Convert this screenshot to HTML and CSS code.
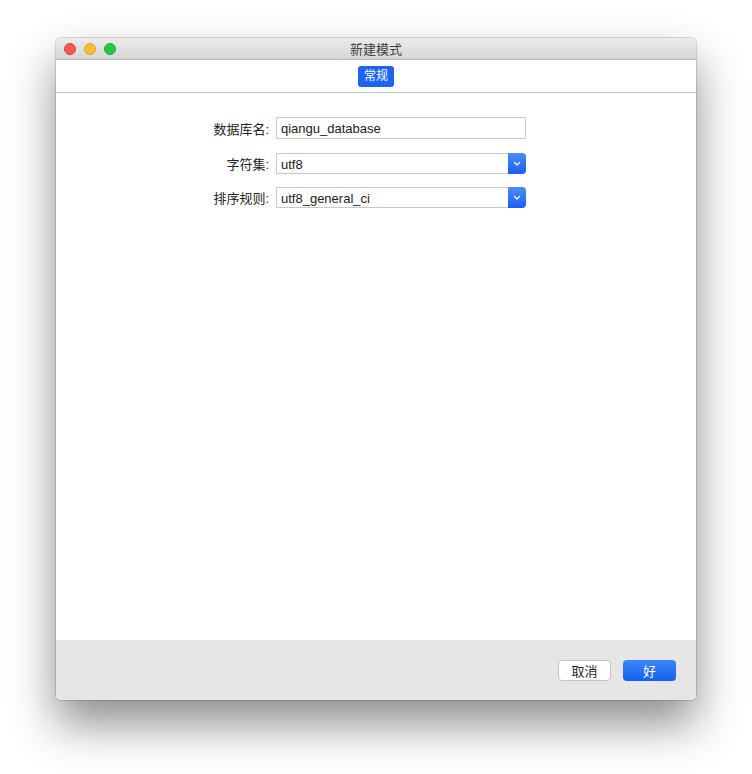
FILE: index.html
```html
<!DOCTYPE html>
<html lang="zh-CN">
<head>
    <meta charset="UTF-8">
    <title>新建模式</title>
    <link rel="stylesheet" href="styles.css">
</head>
<body>
    <div class="window">
        <!-- Title Bar -->
        <div class="titlebar">
            <div class="lights">
                <span class="light red"></span>
                <span class="light yellow"></span>
                <span class="light green"></span>
            </div>
            <div class="title">新建模式</div>
        </div>

        <!-- Tabs -->
        <div class="toolbar">
            <span class="tab active">常规</span>
        </div>

        <!-- Form -->
        <div class="content">
            <div class="form-row first">
                <label>数据库名:</label>
                <div class="field">qiangu_database</div>
            </div>
            <div class="form-row">
                <label>字符集:</label>
                <div class="field select">
                    <span>utf8</span>
                    <span class="arrow">
                        <svg width="8" height="6" viewBox="0 0 8 6"><path d="M1.5 1.5 L4 4 L6.5 1.5" fill="none" stroke="#fff" stroke-width="1.3" stroke-linecap="round" stroke-linejoin="round"/></svg>
                    </span>
                </div>
            </div>
            <div class="form-row">
                <label>排序规则:</label>
                <div class="field select">
                    <span>utf8_general_ci</span>
                    <span class="arrow">
                        <svg width="8" height="6" viewBox="0 0 8 6"><path d="M1.5 1.5 L4 4 L6.5 1.5" fill="none" stroke="#fff" stroke-width="1.3" stroke-linecap="round" stroke-linejoin="round"/></svg>
                    </span>
                </div>
            </div>
        </div>

        <!-- Footer -->
        <div class="footer">
            <button class="btn">取消</button>
            <button class="btn primary">好</button>
        </div>
    </div>
</body>
</html>
```

FILE: styles.css
```css
/* General Styles */
html {
    height: 100%;
}

body {
    margin: 0;
    min-height: 100%;
    box-sizing: border-box;
    padding: 38px 0 0 56px;
    background-color: #fff;
    font-family: "Liberation Sans", "Noto Sans CJK SC", sans-serif;
    font-size: 13px;
    color: #262626;
}

/* Window */
.window {
    width: 640px;
    height: 662px;
    display: flex;
    flex-direction: column;
    background-color: #fff;
    border-radius: 5px;
    box-shadow: 0 0 0 1px rgba(0, 0, 0, 0.15), 0 24px 46px rgba(0, 0, 0, 0.45);
    overflow: hidden;
}

/* Title Bar */
.titlebar {
    height: 21px;
    display: flex;
    align-items: center;
    position: relative;
    background: linear-gradient(#ececec, #d6d6d6);
    border-bottom: 1px solid #b4b4b4;
}

.lights {
    display: flex;
    gap: 8px;
    padding-left: 8px;
}

.light {
    width: 12px;
    height: 12px;
    border-radius: 50%;
    box-sizing: border-box;
}

.red { background-color: #fd5753; border: 1px solid #df3e3a; }
.yellow { background-color: #febc2e; border: 1px solid #dea123; }
.green { background-color: #28c840; border: 1px solid #1eaa2f; }

.title {
    position: absolute;
    left: 0;
    right: 0;
    text-align: center;
    color: #404040;
    font-size: 13px;
}

/* Tabs */
.toolbar {
    height: 32px;
    display: flex;
    justify-content: center;
    align-items: center;
    border-bottom: 1px solid #c1c1c1;
}

.tab {
    width: 36px;
    height: 21px;
    line-height: 21px;
    text-align: center;
    border-radius: 3px;
    font-size: 12px;
}

.tab.active {
    background-color: #1e64f0;
    color: #fff;
}

/* Form */
.content {
    flex-grow: 1;
    padding-top: 24px;
    display: flex;
    flex-direction: column;
    gap: 13px;
}

.form-row {
    display: flex;
    align-items: center;
}

.form-row.first {
    margin-bottom: 1px;
}

.form-row label {
    width: 213px;
    text-align: right;
    padding-right: 7px;
    color: #222;
}

.field {
    width: 250px;
    height: 22px;
    box-sizing: border-box;
    border: 1px solid #c8c8c8;
    padding: 1px 0 0 4px;
    display: flex;
    align-items: center;
    color: #1a1a1a;
}

.field.select {
    height: 21px;
    justify-content: space-between;
    border-radius: 0 4px 4px 0;
    padding-right: 0;
    border-right: none;
}

.arrow {
    width: 18px;
    height: 21px;
    margin-top: -2px;
    margin-bottom: -1px;
    background: linear-gradient(#4d8df8, #1a5ff0);
    border-radius: 0 4px 4px 0;
    display: flex;
    justify-content: center;
    align-items: center;
}

/* Footer */
.footer {
    height: 60px;
    background-color: #e6e6e6;
    display: flex;
    justify-content: flex-end;
    align-items: center;
    gap: 12px;
    padding-right: 20px;
}

.btn {
    width: 53px;
    height: 21px;
    font-family: inherit;
    font-size: 13px;
    border-radius: 4px;
    border: 1px solid #c4c4c4;
    background-color: #fff;
    color: #262626;
    padding: 0;
}

.btn.primary {
    border: none;
    background: linear-gradient(#3b86f7, #1660f0);
    color: #fff;
}
```
